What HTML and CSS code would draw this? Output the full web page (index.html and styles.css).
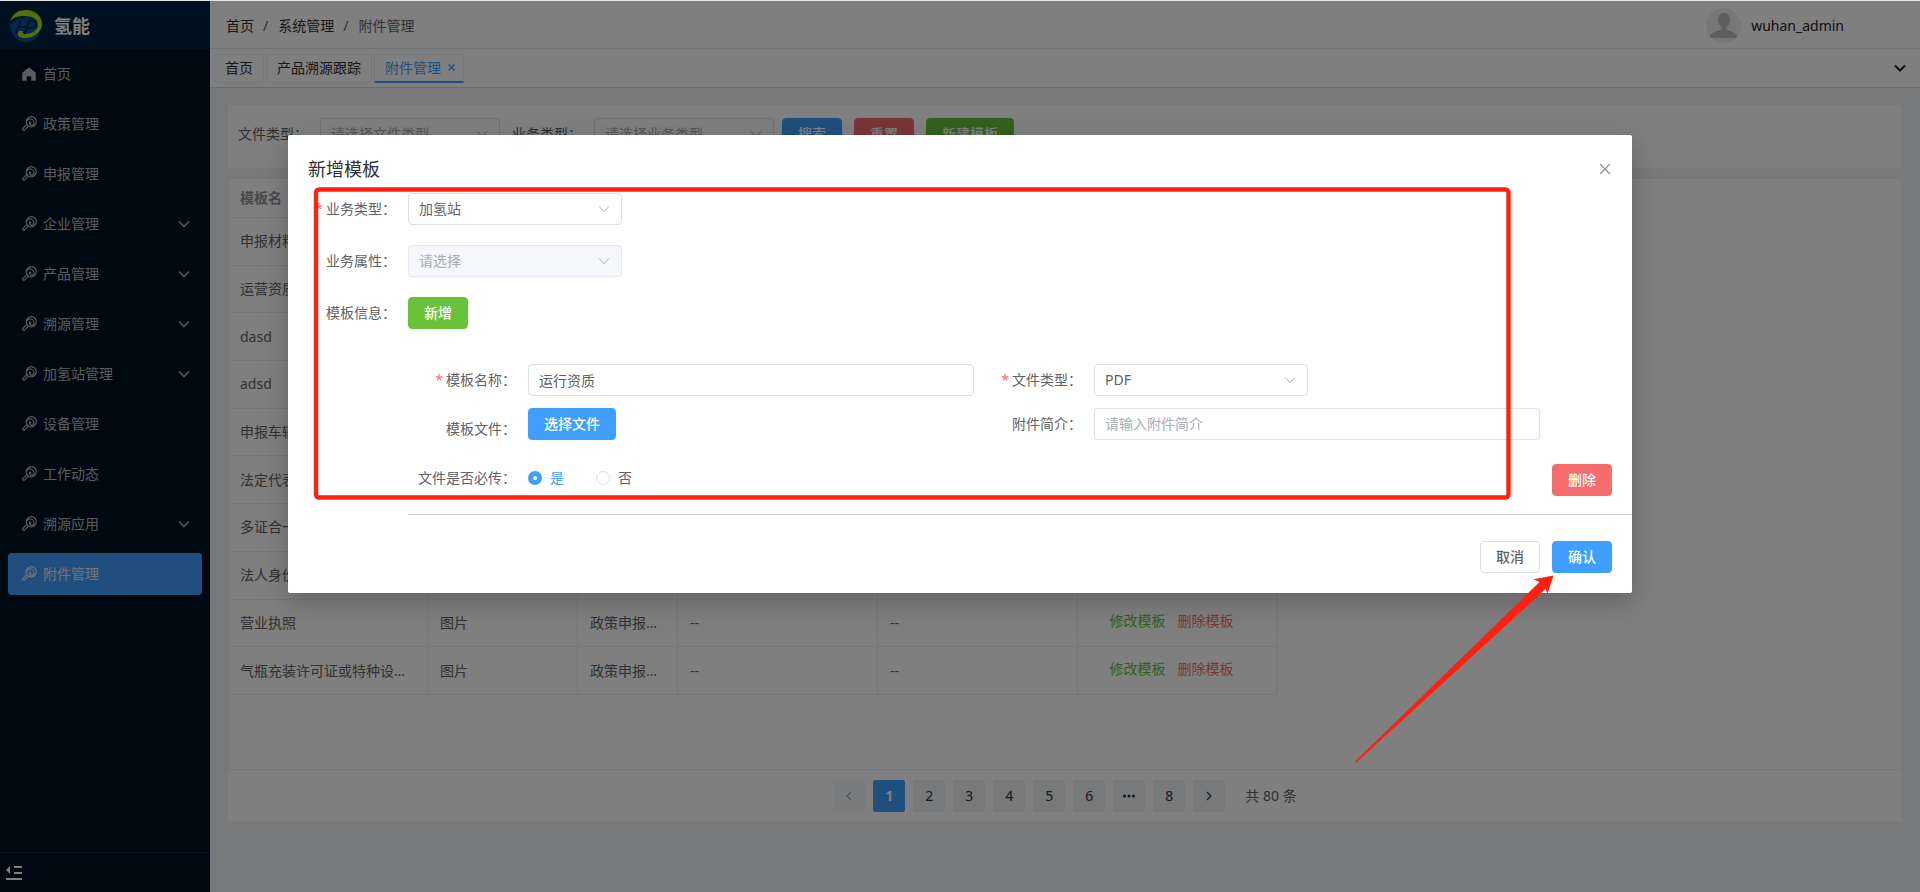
FILE: index.html
```
<!DOCTYPE html>
<html lang="zh-CN">
<head>
<meta charset="utf-8">
<title>附件管理</title>
<link rel="stylesheet" href="styles.css">
</head>
<body>
<svg class="defs" aria-hidden="true">
  <symbol id="lollipop" viewBox="0 0 1024 1024"><path d="M513.28 448a64 64 0 1 1 76.544 49.728A96 96 0 0 0 768 448h64a160 160 0 0 1-320 0h1.28zm-126.976-29.696a256 256 0 1 0 43.52-180.48A256 256 0 0 1 832 448h-64a192 192 0 0 0-381.696-29.696zm105.664 249.472L285.696 874.048a96 96 0 0 1-135.68-135.744l206.208-206.272a320 320 0 1 1 135.744 135.744zm-54.464-36.032a321.92 321.92 0 0 1-45.248-45.248L195.2 783.552a32 32 0 1 0 45.248 45.248l197.056-197.12z"/></symbol>
  <symbol id="home" viewBox="0 0 1024 1024"><path d="M512 128 128 447.936V896h255.936V640H640v256h255.936V447.936z"/></symbol>
  <symbol id="down" viewBox="0 0 12 8"><path d="M1 1.5 6 6.5 11 1.5" fill="none" stroke="currentColor"/></symbol>
</svg>
<div class="app">
  <aside class="sidebar">
    <div class="brand">
      <svg class="logo" viewBox="0 0 32 32" aria-hidden="true">
        <path fill="#0c4c94" d="M0 13C2 9 8 6 15 6c8 0 14 5 14 10 0 3-1 5-3 7l4 1c-3 5-8 8-14 8C6 32-1 23 0 13z"/>
        <path fill="#a4e010" d="M0 11C3 3 9 0 16 0c9 0 16 6 16 14 0 8-8 14-17 14-5 0-8-2-7-5l1-2h4c-1 2 0 3 3 3 6 0 12-4 12-9 0-6-6-9-13-9C9 6 4 7 0 11z"/>
        <path fill="none" stroke="#002040" stroke-width="1.400" d="M1 13C5 8 10 7 15 7M6 23c1-5 3-7 5-12M9 17h8M20 9l-4 12-2 3M20 11h3c5 0 3 7-2 7h-3"/>
      </svg>
      <span class="brand-name">氢能</span>
    </div>
    <nav class="menu">
      <a href="#" class="item"><svg class="mi"><use href="#home"/></svg><span>首页</span></a>
      <a href="#" class="item"><svg class="mi"><use href="#lollipop"/></svg><span>政策管理</span></a>
      <a href="#" class="item"><svg class="mi"><use href="#lollipop"/></svg><span>申报管理</span></a>
      <a href="#" class="item"><svg class="mi"><use href="#lollipop"/></svg><span>企业管理</span><svg class="arrow"><use href="#down"/></svg></a>
      <a href="#" class="item"><svg class="mi"><use href="#lollipop"/></svg><span>产品管理</span><svg class="arrow"><use href="#down"/></svg></a>
      <a href="#" class="item"><svg class="mi"><use href="#lollipop"/></svg><span>溯源管理</span><svg class="arrow"><use href="#down"/></svg></a>
      <a href="#" class="item"><svg class="mi"><use href="#lollipop"/></svg><span>加氢站管理</span><svg class="arrow"><use href="#down"/></svg></a>
      <a href="#" class="item"><svg class="mi"><use href="#lollipop"/></svg><span>设备管理</span></a>
      <a href="#" class="item"><svg class="mi"><use href="#lollipop"/></svg><span>工作动态</span></a>
      <a href="#" class="item"><svg class="mi"><use href="#lollipop"/></svg><span>溯源应用</span><svg class="arrow"><use href="#down"/></svg></a>
      <a href="#" class="item active"><svg class="mi"><use href="#lollipop"/></svg><span>附件管理</span></a>
    </nav>
    <button class="collapse" type="button" aria-label="收起菜单">
      <svg width="16" height="14" viewBox="0 0 16 14"><path fill="currentColor" d="M0 4 4 0v8zM8 0h8v2H8zM8 6h8v2H8zM0 12h16v2H0z"/></svg>
    </button>
  </aside>

  <main class="main">
    <header class="topbar">
      <nav class="crumbs"><a href="#">首页</a><i>/</i><a href="#">系统管理</a><i>/</i><span>附件管理</span></nav>
      <div class="user">
        <svg class="avatar" viewBox="0 0 35 35" aria-hidden="true"><circle cx="17.500" cy="17.500" r="17.500" fill="#eee"/><path fill="#bdbdbd" d="M18 5c4 0 6 3 6 7 0 3-2 6-4 7v2c1 2 11 3 11 8 0 1-1 1-2 1H6c-1 0-2 0-2-1 0-5 10-6 12-8v-2c-2-1-4-4-4-7 0-4 2-7 6-7z"/></svg>
        <span>wuhan_admin</span>
      </div>
    </header>
    <div class="tabs">
      <a href="#" class="tab">首页</a>
      <a href="#" class="tab">产品溯源跟踪</a>
      <a href="#" class="tab current">附件管理<svg width="7" height="7" viewBox="0 0 7 7"><path d="M.5.5l6 6M6.500.5l-6 6" stroke="currentColor" stroke-width="1.300"/></svg></a>
      <button class="more" type="button" aria-label="更多"><svg width="12" height="8"><use href="#down"/></svg></button>
    </div>

    <div class="content">
      <form class="filters">
        <label for="f-file">文件类型：</label>
        <div class="select"><select id="f-file" class="empty"><option>请选择文件类型</option></select><svg><use href="#down"/></svg></div>
        <label class="second" for="f-biz">业务类型：</label>
        <div class="select"><select id="f-biz" class="empty"><option>请选择业务类型</option></select><svg><use href="#down"/></svg></div>
        <div class="filter-actions">
          <button type="button" class="btn primary">搜索</button>
          <button type="button" class="btn danger">重置</button>
          <button type="button" class="btn success">新建模板</button>
        </div>
      </form>

      <section class="panel">
        <div class="table-wrap">
          <table class="table">
            <colgroup><col class="w199"><col class="w150"><col class="w100"><col class="w200"><col class="w200"><col class="w200"></colgroup>
            <thead><tr><th>模板名</th><th>文件类型</th><th>业务类型</th><th>业务属性</th><th>附件简介</th><th>操作</th></tr></thead>
            <tbody>
              <tr><td>申报材料</td><td>图片</td><td>政策申报材料</td><td>--</td><td>--</td><td class="ops"><button type="button" class="edit">修改模板</button><button type="button" class="del">删除模板</button></td></tr>
              <tr><td>运营资质</td><td>图片</td><td>政策申报材料</td><td>--</td><td>--</td><td class="ops"><button type="button" class="edit">修改模板</button><button type="button" class="del">删除模板</button></td></tr>
              <tr><td>dasd</td><td>图片</td><td>政策申报材料</td><td>--</td><td>--</td><td class="ops"><button type="button" class="edit">修改模板</button><button type="button" class="del">删除模板</button></td></tr>
              <tr><td>adsd</td><td>图片</td><td>政策申报材料</td><td>--</td><td>--</td><td class="ops"><button type="button" class="edit">修改模板</button><button type="button" class="del">删除模板</button></td></tr>
              <tr><td>申报车辆</td><td>图片</td><td>政策申报材料</td><td>--</td><td>--</td><td class="ops"><button type="button" class="edit">修改模板</button><button type="button" class="del">删除模板</button></td></tr>
              <tr><td>法定代表人</td><td>图片</td><td>政策申报材料</td><td>--</td><td>--</td><td class="ops"><button type="button" class="edit">修改模板</button><button type="button" class="del">删除模板</button></td></tr>
              <tr><td>多证合一</td><td>图片</td><td>政策申报材料</td><td>--</td><td>--</td><td class="ops"><button type="button" class="edit">修改模板</button><button type="button" class="del">删除模板</button></td></tr>
              <tr><td>法人身份证</td><td>图片</td><td>政策申报材料</td><td>--</td><td>--</td><td class="ops"><button type="button" class="edit">修改模板</button><button type="button" class="del">删除模板</button></td></tr>
              <tr><td>营业执照</td><td>图片</td><td>政策申报材料</td><td>--</td><td>--</td><td class="ops"><button type="button" class="edit">修改模板</button><button type="button" class="del">删除模板</button></td></tr>
              <tr><td>气瓶充装许可证或特种设备证</td><td>图片</td><td>政策申报材料</td><td>--</td><td>--</td><td class="ops"><button type="button" class="edit">修改模板</button><button type="button" class="del">删除模板</button></td></tr>
            </tbody>
          </table>
        </div>
        <div class="pager">
          <button type="button" class="off" aria-label="上一页"><svg width="8" height="12" viewBox="0 0 8 12"><path d="M6 2 2 6l4 4" fill="none" stroke="currentColor" stroke-width="1.200"/></svg></button>
          <button type="button" class="on">1</button>
          <button type="button">2</button>
          <button type="button">3</button>
          <button type="button">4</button>
          <button type="button">5</button>
          <button type="button">6</button>
          <button type="button" aria-label="更多页"><svg width="12" height="4" viewBox="0 0 12 4"><g fill="currentColor"><circle cx="1.500" cy="2" r="1.500"/><circle cx="6" cy="2" r="1.500"/><circle cx="10.500" cy="2" r="1.500"/></g></svg></button>
          <button type="button">8</button>
          <button type="button" aria-label="下一页"><svg width="8" height="12" viewBox="0 0 8 12"><path d="M2 2l4 4-4 4" fill="none" stroke="currentColor" stroke-width="1.200"/></svg></button>
          <span>共 80 条</span>
        </div>
      </section>
    </div>
  </main>

  <div class="mask">
    <div class="dialog" role="dialog" aria-labelledby="dlg-title">
      <header class="dialog-head">
        <h2 id="dlg-title">新增模板</h2>
        <button type="button" class="close" aria-label="关闭"><svg width="12" height="12" viewBox="0 0 12 12"><path d="M1 1l10 10M11 1 1 11" stroke="currentColor" stroke-width="1.200"/></svg></button>
      </header>
      <form class="form">
        <div class="row"><label class="req" for="d-biz">业务类型：</label><div class="select"><select id="d-biz"><option>加氢站</option></select><svg><use href="#down"/></svg></div></div>
        <div class="row"><label for="d-attr">业务属性：</label><div class="select"><select id="d-attr" class="empty" disabled><option>请选择</option></select><svg><use href="#down"/></svg></div></div>
        <div class="row"><label for="d-add">模板信息：</label><button id="d-add" type="button" class="btn success">新增</button></div>

        <div class="template">
          <div class="grid">
            <div class="cell"><label class="label req" for="t-name">模板名称：</label><input id="t-name" class="input" type="text" value="运行资质"></div>
            <div class="cell"><label class="label req" for="t-type">文件类型：</label><div class="select"><select id="t-type"><option>PDF</option></select><svg><use href="#down"/></svg></div></div>
            <div class="cell"><label class="label tall" for="t-file">模板文件：</label><button id="t-file" type="button" class="btn primary">选择文件</button></div>
            <div class="cell"><label class="label" for="t-desc">附件简介：</label><input id="t-desc" class="input" type="text" placeholder="请输入附件简介"></div>
            <div class="cell must" role="radiogroup" aria-labelledby="t-must"><span class="label" id="t-must">文件是否必传：</span>
              <label class="radio checked"><input type="radio" name="must" checked>是</label>
              <label class="radio"><input type="radio" name="must">否</label>
            </div>
          </div>
          <div class="side"><button type="button" class="btn danger">删除</button></div>
        </div>
      </form>
      <footer class="dialog-foot">
        <button type="button" class="btn">取消</button>
        <button type="button" class="btn primary">确认</button>
      </footer>
      <svg class="marks" width="1344" height="640" viewBox="0 0 1344 640" aria-hidden="true">
        <rect x="28" y="54.500" width="1192.500" height="308" rx="3" fill="none" stroke="#ff2010" stroke-width="4.400"/>
        <path fill="#ff2010" d="M1265.500 440.500 1245.500 444.300 1251.500 447 1067 626.500 1068 627.800 1257.500 454 1259.700 458.500z"/>
      </svg>
    </div>
  </div>
</div>
</body>
</html>
```
FILE: styles.css
```
*, *::before, *::after { box-sizing: border-box; }
body {
  margin: 0;
  height: 100vh;
  border-top: 1px solid #dfe3e1;
  font: 14px/20px "Noto Sans", "Noto Sans CJK SC", sans-serif;
  color: #606266;
  overflow: hidden;
}
a { color: inherit; text-decoration: none; }
button, input, select { font: inherit; color: inherit; margin: 0; }
button { border: 0; background: none; padding: 0; }
.defs { display: none; }

.app { position: relative; display: flex; height: 100%; }

/* sidebar */
.sidebar { display: flex; flex-direction: column; flex: none; width: 210px; background: #001122; }
.brand { display: flex; align-items: center; gap: 12px; height: 48px; padding: 2px 10px 0; background: #002040; }
.logo { width: 32px; height: 32px; }
.brand-name { font-size: 18px; line-height: 24px; font-weight: 700; color: #fff; }
.menu { display: flex; flex-direction: column; gap: 8px; flex: 1; padding: 4px 8px; color: #b4b9bf; }
.item { display: flex; align-items: center; height: 42px; padding: 0 12px; border-radius: 4px; }
.item.active { background: #409eff; color: #e4e8ee; }
.mi { width: 18px; height: 18px; margin-right: 5px; fill: currentColor; }
.arrow { width: 12px; height: 8px; margin-left: auto; stroke-width: 1.4; }
.collapse { display: flex; align-items: center; height: 40px; padding: 0 6px; color: #fff; border-top: 1px solid #0a2440; }

/* header */
.main { flex: 1; min-width: 0; display: flex; flex-direction: column; background: #f0f2f5; }
.topbar { display: flex; align-items: center; justify-content: space-between; height: 48px; padding: 2px 76px 0 16px; background: #fff; border-bottom: 1px solid #e6e8eb; }
.crumbs { display: flex; color: #303133; }
.crumbs i { margin: 0 10px 0 9px; font-style: normal; color: #606266; }
.crumbs span { color: #606266; }
.user { display: flex; align-items: center; gap: 10px; color: #222; }
.avatar { width: 35px; height: 35px; }
.tabs { display: flex; align-items: center; gap: 2px; height: 39px; padding: 0 14px 0 4px; background: #fff; border-bottom: 1px solid #d8dce5; color: #303133; }
.tab { display: flex; align-items: center; gap: 7px; height: 29px; padding: 0 10px; border: 1px solid #ebeef5; border-radius: 3px; }
.tab.current { padding-right: 8px; color: #409eff; border-bottom: 2px solid #409eff; border-radius: 3px 3px 0 0; }
.more { display: flex; margin-left: auto; stroke-width: 2; color: #222; }

/* content */
.content { padding: 17px 18px; }
.filters { display: flex; align-items: center; padding: 13px 10px 18px; margin-bottom: 10px; background: #fff; }
.filters label { margin-right: 12px; white-space: nowrap; }
.filters .second { margin-left: 12px; }
.filters .select { width: 180px; }
.filter-actions { display: flex; gap: 12px; margin-left: 8px; }

.select { position: relative; width: 214px; }
.select select, .input { display: block; width: 100%; height: 32px; padding: 0 10px; border: 1px solid #dcdfe6; border-radius: 4px; background: #fff; appearance: none; outline: 0; }
.select select { opacity: 1; }
.select .empty { color: #a8abb2; }
.select select:disabled { background: #f5f7fa; border-color: #e4e7ed; }
.select svg { position: absolute; right: 12px; top: 12px; width: 12px; height: 8px; color: #a8abb2; pointer-events: none; }
.input::placeholder { color: #a8abb2; }

.btn { height: 32px; padding: 0 15px; border: 1px solid #dcdfe6; border-radius: 4px; background: #fff; font-weight: 500; }
.primary { background: #409eff; border-color: #409eff; color: #fff; }
.danger { background: #f56c6c; border-color: #f56c6c; color: #fff; }
.success { background: #67c23a; border-color: #67c23a; color: #fff; }

.panel { background: #fff; }
.table-wrap { height: 592px; border: 1px solid #ebeef5; }
.table { width: 1049px; height: 516px; table-layout: fixed; border-collapse: separate; border-spacing: 0; }
.w199 { width: 199px; }
.w200 { width: 200px; }
.w150 { width: 150px; }
.w100 { width: 100px; }
.table th, .table td { padding: 0 12px; border-right: 1px solid #ebeef5; border-bottom: 1px solid #ebeef5; text-align: left; white-space: nowrap; overflow: hidden; text-overflow: ellipsis; }
.table th:first-child, .table td:first-child { padding-left: 11px; }
.table th { height: 39px; color: #909399; font-weight: 700; }
.table td { height: 47px; }
.table .ops { padding-bottom: 4px; text-align: center; }
.ops button { margin-right: 12px; }
.edit { color: #67c23a; }
.del { color: #f56c6c; }

.pager { display: flex; align-items: center; justify-content: center; gap: 8px; padding: 10px 0; color: #303133; }
.pager button { display: flex; align-items: center; justify-content: center; width: 32px; height: 32px; border-radius: 2px; background: #f0f2f5; }
.pager .on { background: #409eff; color: #fff; font-weight: 700; }
.pager .off { color: #a8abb2; background: #f5f7fa; }
.pager span { margin-left: 12px; color: #606266; }

/* dialog */
.mask { position: absolute; inset: 0; background: rgba(0, 0, 0, .5); }
.dialog { position: relative; width: 70%; margin: 15vh auto 0; background: #fff; border-radius: 2px; box-shadow: 0 12px 32px 4px rgba(0, 0, 0, .08), 0 8px 20px rgba(0, 0, 0, .12); }
.dialog-head { display: flex; align-items: center; justify-content: space-between; padding: 22px 21px 8px 20px; }
.dialog-head h2 { margin: 0; font-size: 18px; line-height: 24px; font-weight: 400; color: #303133; }
.close { display: flex; color: #909399; }
.form { padding: 4px 0 0 20px; }
.row { display: flex; align-items: center; margin-bottom: 20px; }
.row > label { width: 100px; padding-right: 12px; text-align: right; }
.req::before { content: "*"; margin-right: 3px; color: #f56c6c; }
.template { display: flex; margin: 35px 0 0 100px; padding-bottom: 18px; border-bottom: 1px solid #ccc; }
.grid { flex: 1; display: grid; grid-template-columns: 1fr 1fr; }
.cell { display: flex; align-items: flex-start; padding-bottom: 12px; }
.label { flex: none; width: 120px; padding-right: 12px; line-height: 32px; text-align: right; }
.tall { line-height: 42px; }
.must { align-items: center; padding: 2px 0 4px; }
.must .label { line-height: 28px; }
.radio { display: flex; align-items: center; gap: 8px; margin-right: 32px; }
.radio input { width: 14px; height: 14px; border: 1px solid #dcdfe6; border-radius: 50%; background: #fff; appearance: none; }
.radio input:checked { border: 5px solid #409eff; }
.checked { color: #409eff; }
.side { display: flex; align-items: flex-end; justify-content: flex-end; width: 92px; padding-right: 20px; }
.dialog-foot { display: flex; justify-content: flex-end; gap: 12px; padding: 26px 20px 20px; }
.marks { position: absolute; left: 0; top: 0; pointer-events: none; }
```
